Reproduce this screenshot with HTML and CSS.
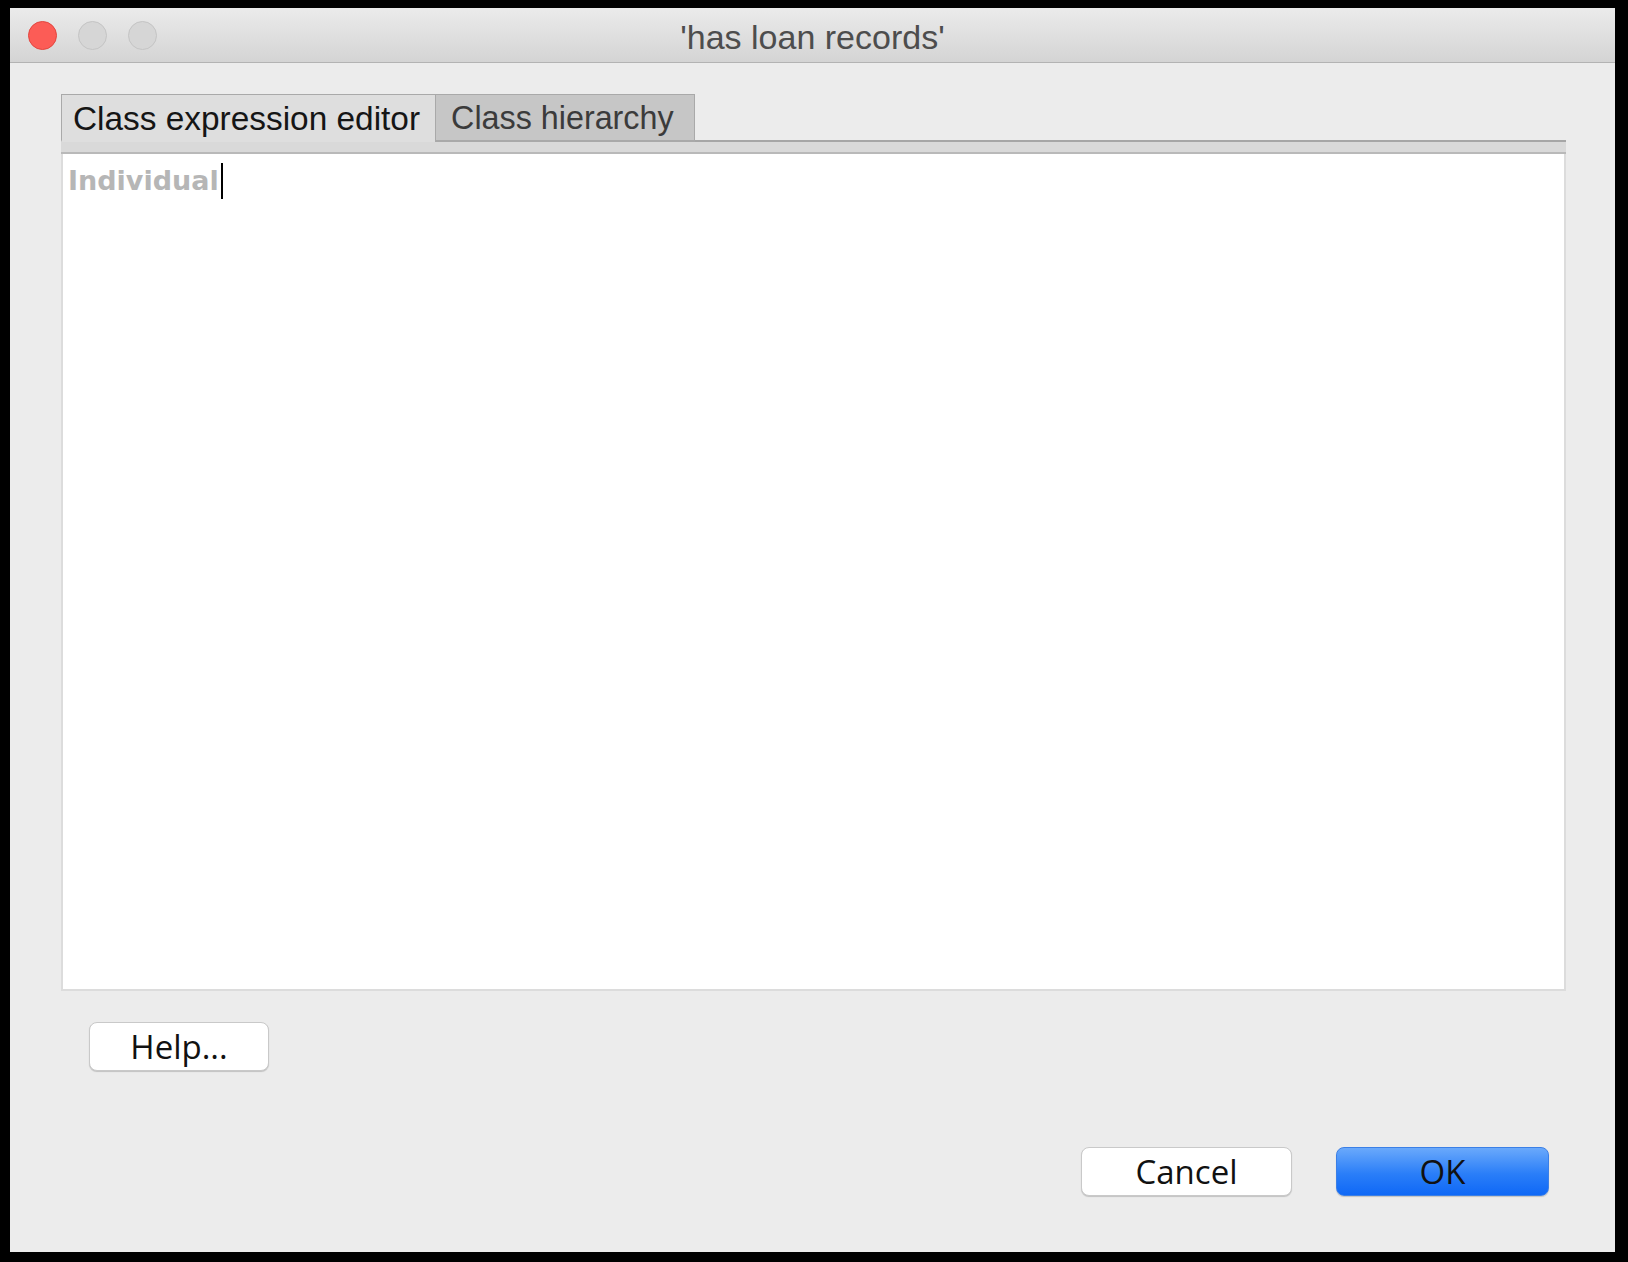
FILE: index.html
```html
<!DOCTYPE html>
<html lang="en">
<head>
<meta charset="utf-8">
<title>'has loan records'</title>
<link rel="stylesheet" href="styles.css">
</head>
<body>
<div class="window">
  <div class="titlebar">
    <div class="lights">
      <span class="light close"></span>
      <span class="light"></span>
      <span class="light"></span>
    </div>
    <div class="title">'has loan records'</div>
  </div>
  <div class="content">
    <div class="tabbar">
      <div class="tab selected">Class expression editor</div>
      <div class="tab">Class hierarchy</div>
      <div class="tabfill"></div>
    </div>
    <div class="strip"></div>
    <div class="editor">
      <span class="placeholder">Individual</span><span class="caret"></span>
    </div>
    <div class="helprow">
      <button class="btn help">Help...</button>
    </div>
    <div class="footer">
      <button class="btn cancel">Cancel</button>
      <button class="btn ok">OK</button>
    </div>
  </div>
</div>
</body>
</html>
```
FILE: styles.css
```css
html, body {
  margin: 0;
  padding: 0;
  background: #000;
}
body {
  padding: 8px 13px 10px 10px;
  width: 1628px;
  height: 1262px;
  box-sizing: border-box;
  overflow: hidden;
}
.window {
  height: 1244px;
  background: #ececec;
  display: flex;
  flex-direction: column;
}
.titlebar {
  position: relative;
  height: 54px;
  flex: none;
  background: linear-gradient(#ebebeb, #d4d4d4);
  border-bottom: 1px solid #b3b3b3;
  display: flex;
  align-items: center;
  justify-content: center;
}
.lights {
  position: absolute;
  left: 18px;
  top: 13px;
  display: flex;
  gap: 21px;
}
.light {
  width: 27px;
  height: 27px;
  border-radius: 50%;
  background: #d6d6d6;
  border: 1px solid #c4c4c4;
}
.light.close {
  background: #fc5c56;
  border-color: #e2463f;
}
.title {
  font-family: "Liberation Sans", Arial, sans-serif;
  font-size: 34px;
  color: #4d4d4d;
  padding-top: 4px;
}
.content {
  flex: 1;
  display: flex;
  flex-direction: column;
  padding: 31px 49px 56px 51px;
  min-height: 0;
}
.tabbar {
  display: flex;
  align-items: flex-end;
  height: 48px;
  flex: none;
}
.tab {
  font-family: "Liberation Sans", Arial, sans-serif;
  font-size: 32.3px;
  height: 48px;
  box-sizing: border-box;
  display: flex;
  align-items: center;
  padding: 2px 20px 0 15px;
  border: 1px solid #a9a9a9;
  border-bottom: 2px solid #a9a9a9;
  background: #c6c6c6;
  color: #3b3b3b;
}
.tab.selected {
  font-size: 33.4px;
  padding: 2px 15px 0 11px;
  background: #dedede;
  color: #151515;
  border-bottom-color: #dedede;
  border-right: none;
}
.tabfill {
  flex: 1;
  height: 0;
  border-bottom: 2px solid #a6a6a6;
}
.strip {
  height: 10px;
  flex: none;
  background: #d9d9d9;
  border-bottom: 2px solid #b9b9b9;
}
.editor {
  flex: 1;
  background: #fff;
  border: 2px solid #dcdcdc;
  border-top: none;
  padding: 9px 5px;
  min-height: 0;
  display: flex;
  align-items: flex-start;
}
.placeholder {
  font-family: "DejaVu Sans", sans-serif;
  font-weight: bold;
  font-size: 27px;
  line-height: 36px;
  color: #b6b6b6;
}
.caret {
  width: 2px;
  height: 36px;
  background: #000;
  margin-left: 2px;
}
.helprow {
  flex: none;
  margin-top: 31px;
  padding-left: 28px;
  display: flex;
}
.btn {
  font-family: "Open Sans", "DejaVu Sans", sans-serif;
  font-size: 33px;
  color: #111;
  height: 49px;
  box-sizing: border-box;
  border-radius: 8px;
  border: 1px solid #c9c9c9;
  background: #fff;
  box-shadow: 0 1px 1px rgba(0, 0, 0, 0.18);
  padding: 0;
  line-height: 44px;
  display: flex;
  align-items: center;
  justify-content: center;
}
.help {
  width: 180px;
}
.footer {
  flex: none;
  margin-top: 76px;
  display: flex;
  justify-content: flex-end;
  gap: 44px;
  padding-right: 17px;
}
.cancel {
  width: 211px;
}
.ok {
  width: 213px;
  background: linear-gradient(#6aa9fb, #2a7ef8 55%, #0f68f6);
  border-color: #3b7fe6;
}
```
